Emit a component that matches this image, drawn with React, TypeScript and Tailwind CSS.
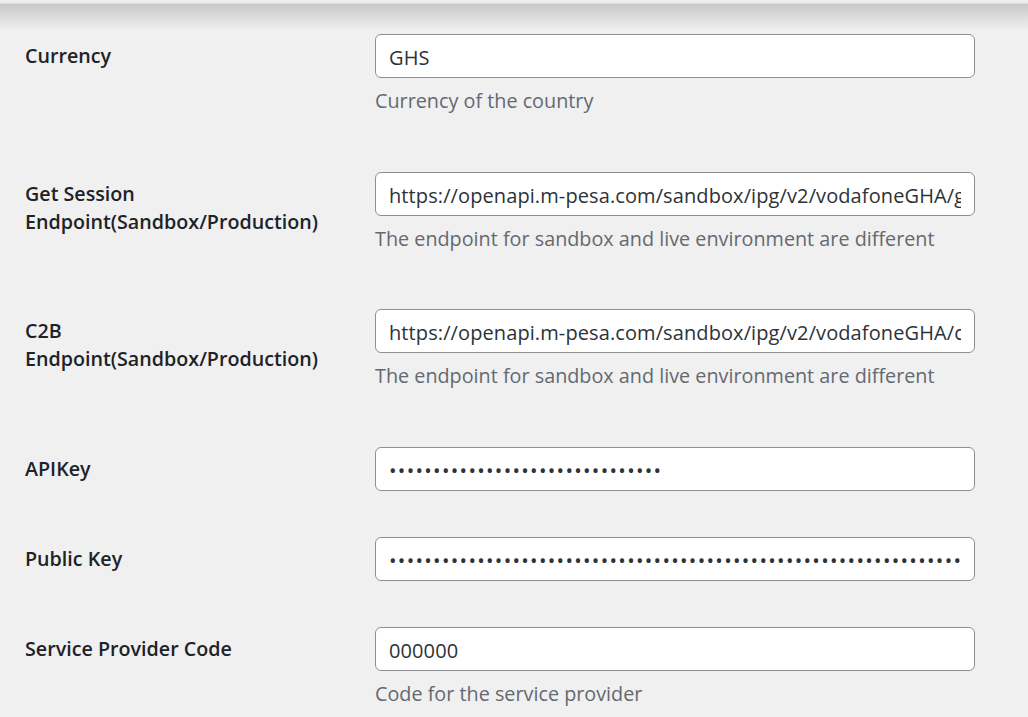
import React from 'react';

type Field = {
  label: string[];
  value: string;
  type?: 'text' | 'password';
  description?: string;
};

const fields: Field[] = [
  { label: ['Currency'], value: 'GHS', description: 'Currency of the country' },
  {
    label: ['Get Session', 'Endpoint(Sandbox/Production)'],
    value: 'https://openapi.m-pesa.com/sandbox/ipg/v2/vodafoneGHA/getSession/',
    description: 'The endpoint for sandbox and live environment are different',
  },
  {
    label: ['C2B', 'Endpoint(Sandbox/Production)'],
    value: 'https://openapi.m-pesa.com/sandbox/ipg/v2/vodafoneGHA/c2bPayment/singleStage/',
    description: 'The endpoint for sandbox and live environment are different',
  },
  { label: ['APIKey'], value: 'x'.repeat(31), type: 'password' },
  { label: ['Public Key'], value: 'x'.repeat(120), type: 'password' },
  { label: ['Service Provider Code'], value: '000000', description: 'Code for the service provider' },
];

function Row({ field }: { field: Field }) {
  const isPassword = field.type === 'password';
  return (
    <div className="grid grid-cols-[350px_600px] py-[23px]">
      <div className="pt-[8px] text-[19.7px] leading-[28px] font-semibold text-[#1d2327]">
        {field.label.map((line) => (
          <div key={line}>{line}</div>
        ))}
      </div>
      <div>
        <input
          type={field.type ?? 'text'}
          defaultValue={field.value}
          readOnly
          className={
            'block h-[44px] w-[600px] rounded-[6px] border border-[#8c8f94] bg-white px-[13px] pt-[3px] text-[20px] text-[#2c3338] outline-none ' +
            (isPassword ? 'tracking-[1.3px]' : 'tracking-[0.1px]')
          }
        />
        {field.description && (
          <p className="mt-[9px] mb-[10.5px] text-[19.8px] leading-[28px] text-[#646970]">{field.description}</p>
        )}
      </div>
    </div>
  );
}

export default function App() {
  return (
    <div
      className="min-h-screen bg-[#f0f0f1] bg-[linear-gradient(to_bottom,#ededee_0px,#ededee_3px,#c7c8ca_4px,#f0f0f1_30px)] pt-[11px] pl-[25px]"
      style={{ fontFamily: '"Open Sans", "Noto Sans", sans-serif' }}
    >
      {fields.map((f) => (
        <Row key={f.label.join(' ')} field={f} />
      ))}
    </div>
  );
}
